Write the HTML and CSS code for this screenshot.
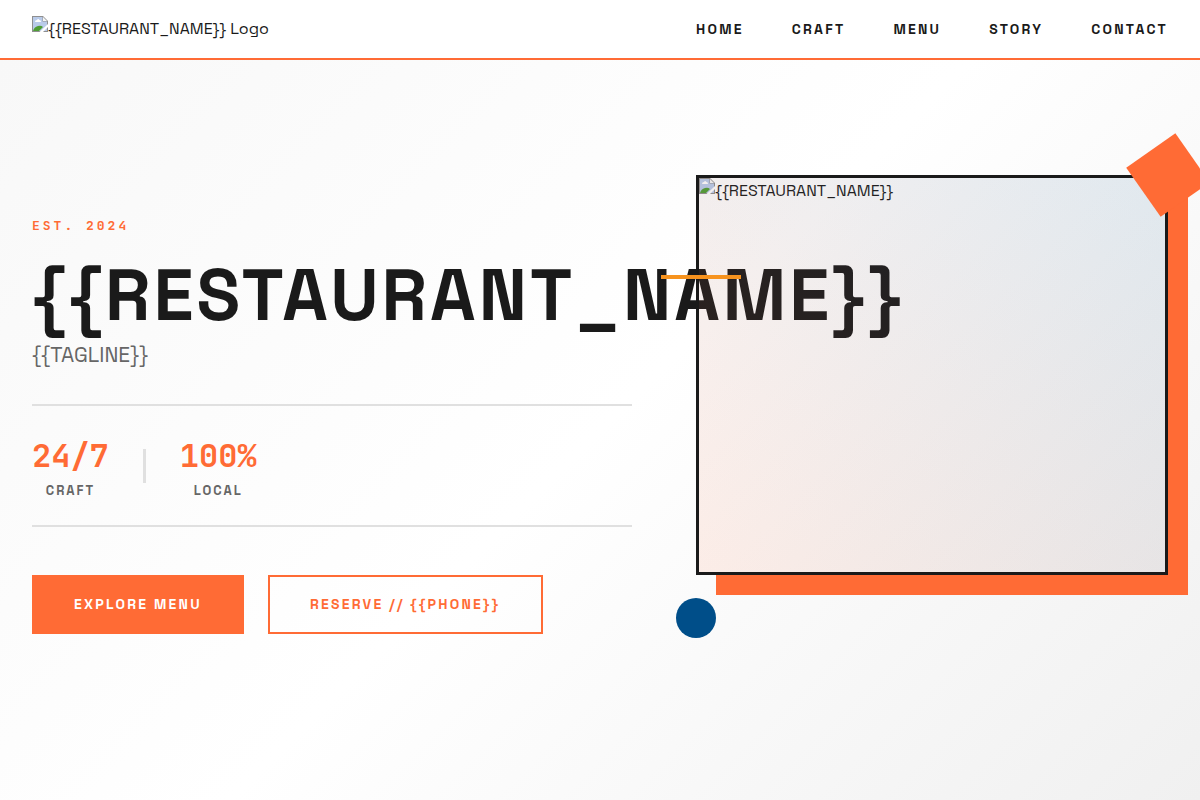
FILE: index.html
```html
<!DOCTYPE html>
<html lang="en">
<head>
<meta charset="utf-8">
<meta name="viewport" content="width=device-width, initial-scale=1">
<title>{{RESTAURANT_NAME}}</title>
<link rel="stylesheet" href="styles.css">
</head>
<body>
<svg class="sprite" aria-hidden="true">
  <symbol id="missing" viewBox="0 0 16 16">
    <path d="M0 0H11L16 5V16H0Z" fill="#8f8f8f"/>
    <path d="M1 1H10.500V5.500H15V15H1Z" fill="#b9cbea"/>
    <path d="M11 1L15 5H11Z" fill="#f5f5f5"/>
    <path d="M3 6Q3 4 5 4Q6 2 7.500 4Q9 4 9 6Z" fill="#fff"/>
    <path d="M1 15Q2 11 6 10Q9 9 11 11L7 15Z" fill="#4f9e35"/>
    <path d="M7.500 16L16 8V11L11 16Z" fill="#fff"/>
  </symbol>
</svg>
<header class="header">
  <a class="logo missing-image" href="#home"><svg class="missing-icon" aria-hidden="true"><use href="#missing"/></svg><span>{{RESTAURANT_NAME}} Logo</span></a>
  <nav class="nav" aria-label="Main">
    <a href="#home">HOME</a>
    <a href="#craft">CRAFT</a>
    <a href="#menu">MENU</a>
    <a href="#story">STORY</a>
    <a href="#contact">CONTACT</a>
  </nav>
</header>
<main class="hero" id="home">
  <section class="intro">
    <p class="eyebrow">EST. 2024</p>
    <h1 class="title">{{RESTAURANT_NAME}}</h1>
    <p class="tagline">{{TAGLINE}}</p>
    <div class="stats">
      <div class="stat"><span class="stat-value">24/7</span><span class="stat-label">CRAFT</span></div>
      <div class="stat-divider"></div>
      <div class="stat"><span class="stat-value">100%</span><span class="stat-label">LOCAL</span></div>
    </div>
    <div class="actions">
      <a class="button button-primary" href="#menu">EXPLORE MENU</a>
      <a class="button" href="#contact">RESERVE // {{PHONE}}</a>
    </div>
  </section>
  <div class="visual">
    <div class="frame">
      <div class="missing-image"><svg class="missing-icon" aria-hidden="true"><use href="#missing"/></svg><span>{{RESTAURANT_NAME}}</span></div>
    </div>
    <span class="shape square"></span>
    <span class="shape circle"></span>
    <span class="shape line"></span>
  </div>
</main>
</body>
</html>
```

FILE: styles.css
```css
:root {
  --orange: #ff6b35;
  --ink: #1a1a1a;
  --grey: #666;
  --rule: #e0e0e0;
  --mono: "JetBrains Mono", "DejaVu Sans Mono", monospace;
}

* { box-sizing: border-box; }

body {
  margin: 0;
  min-height: 100vh;
  display: flex;
  flex-direction: column;
  overflow-x: hidden;
  background: #fff;
  color: var(--ink);
  font: 16px/26px "Space Grotesk", Inter, sans-serif;
}

a { color: inherit; text-decoration: none; }
p, h1 { margin: 0; }
.sprite { position: absolute; width: 0; height: 0; }

.header {
  display: flex;
  align-items: center;
  justify-content: space-between;
  padding: 16px 32px;
  border-bottom: 2px solid var(--orange);
}

.missing-image { display: flex; align-items: flex-start; }
.missing-icon { width: 16px; height: 16px; flex: none; }

.nav {
  display: flex;
  gap: 48px;
  font-size: 14px;
  font-weight: 700;
  letter-spacing: 0.16em;
}

.hero {
  flex: 1;
  display: grid;
  grid-template-columns: minmax(0, 75fr) minmax(0, 59fr);
  align-items: start;
  gap: 64px;
  padding: 115px 32px 64px;
  overflow: hidden;
  background: linear-gradient(135deg, #f8f8f8 0%, #fff 50%, #f0f0f0 100%);
}

.intro { padding-top: 41px; }

.eyebrow {
  color: var(--orange);
  font: 700 13px/20px var(--mono);
  letter-spacing: 3px;
}

.title {
  margin-top: 19px;
  font-size: 72px;
  line-height: 80px;
  font-weight: 700;
  letter-spacing: 3px;
}

.tagline {
  margin-top: 2px;
  color: var(--grey);
  font-size: 21px;
  line-height: 35px;
}

.stats {
  display: flex;
  align-items: center;
  gap: 34px;
  margin: 32px 0 48px;
  padding: 24px 0;
  border-top: 2px solid var(--rule);
  border-bottom: 2px solid var(--rule);
}

.stat { display: flex; flex-direction: column; align-items: center; }
.stat-value { color: var(--orange); font: 700 32px/51px var(--mono); }
.stat-label {
  color: var(--grey);
  font-size: 13px;
  line-height: 20px;
  font-weight: 700;
  letter-spacing: 0.15em;
}
.stat-divider { width: 3px; height: 34px; background: var(--rule); }

.actions { display: flex; gap: 24px; }

.button {
  padding: 16px 40px;
  border: 2px solid var(--orange);
  color: var(--orange);
  font-size: 14px;
  line-height: 23px;
  font-weight: 700;
  letter-spacing: 0.16em;
  white-space: nowrap;
}
.button-primary { background: var(--orange); color: #fff; }

.visual { position: relative; }

.frame {
  position: relative;
  height: 400px;
  border: 3px solid var(--ink);
  box-shadow: 20px 20px 0 var(--orange);
}
.frame::after {
  content: "";
  position: absolute;
  inset: 0;
  background: linear-gradient(45deg, rgba(255, 107, 53, 0.1), rgba(0, 78, 137, 0.1));
}

.shape { position: absolute; }
.square { top: -30px; right: -30px; width: 60px; height: 60px; background: var(--orange); transform: rotate(-35deg); }
.circle { left: -20px; bottom: -63px; width: 40px; height: 40px; border-radius: 50%; background: #004e89; }
.line { top: 100px; left: -35px; width: 80px; height: 4px; background: #f7931e; }
```
